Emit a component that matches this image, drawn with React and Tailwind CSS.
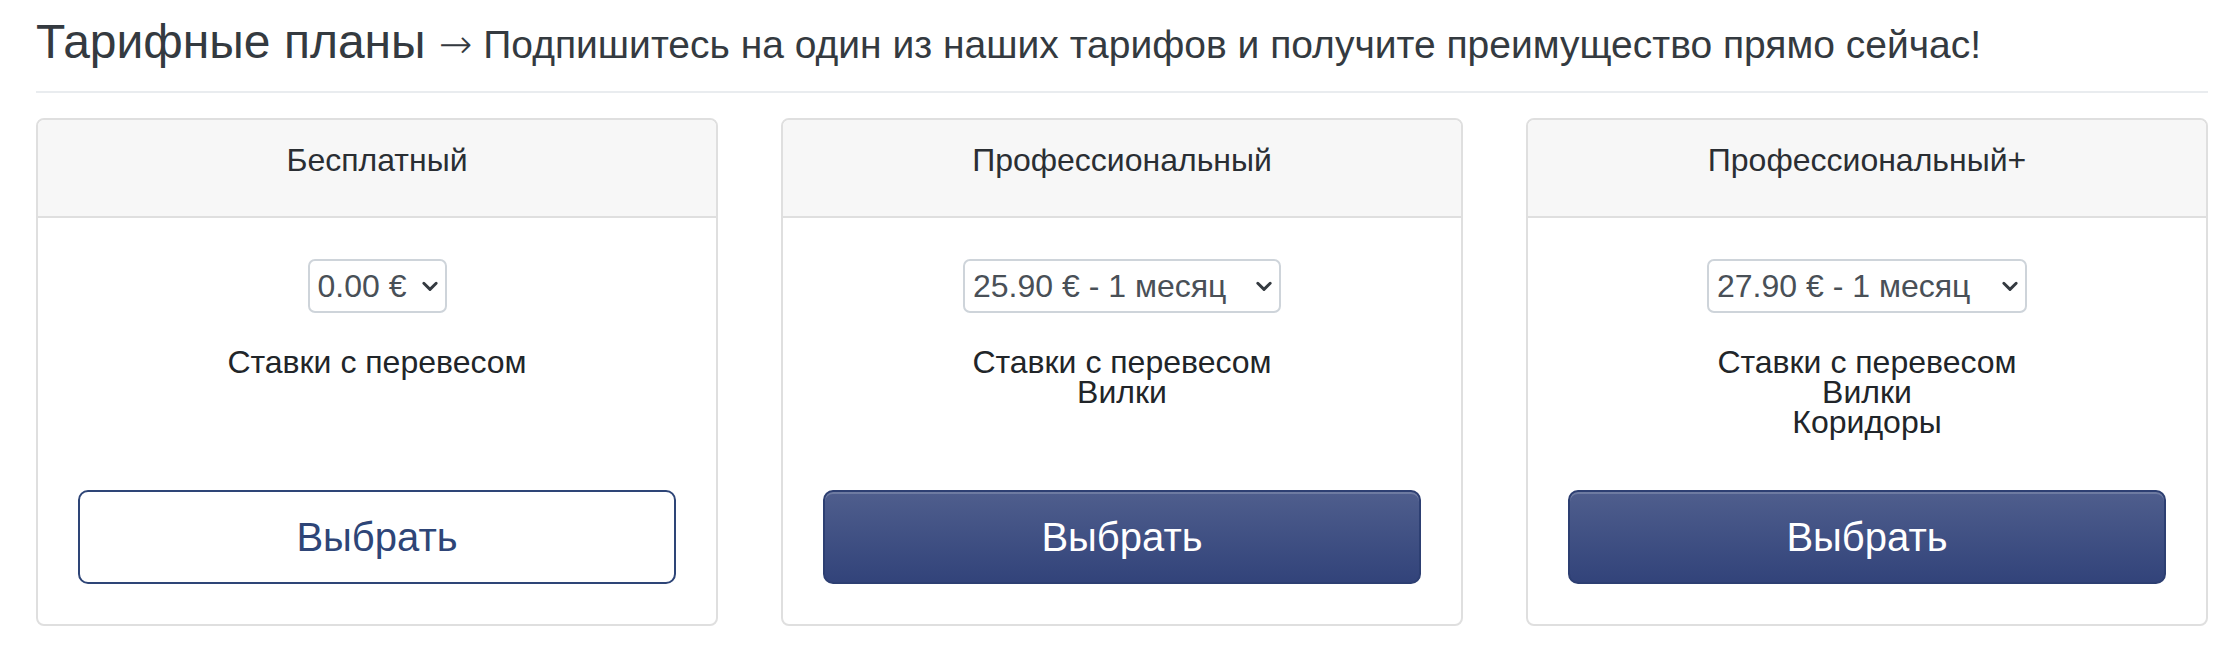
const plans = [
  {
    name: 'Бесплатный',
    price: '0.00 €',
    selectWidth: 'w-[139px]',
    features: ['Ставки с перевесом'],
    primary: false,
  },
  {
    name: 'Профессиональный',
    price: '25.90 € - 1 месяц',
    selectWidth: 'w-[318px]',
    features: ['Ставки с перевесом', 'Вилки'],
    primary: true,
  },
  {
    name: 'Профессиональный+',
    price: '27.90 € - 1 месяц',
    selectWidth: 'w-[320px]',
    features: ['Ставки с перевесом', 'Вилки', 'Коридоры'],
    primary: true,
  },
];

const Chevron = () => (
  <svg
    className="pointer-events-none absolute right-[8px] top-1/2 h-[18px] w-[18px] -translate-y-1/2"
    viewBox="0 0 16 16"
    fill="none"
  >
    <path
      d="M2.5 5.5l5.5 5.5 5.5-5.5"
      stroke="#343a40"
      strokeWidth="2.6"
      strokeLinecap="round"
      strokeLinejoin="round"
    />
  </svg>
);

const PlanCard = ({ plan }) => (
  <div className="flex flex-col overflow-hidden rounded-[8px] border-2 border-[#dfdfdf] bg-white">
    <div className="border-b-2 border-[#dfdfdf] bg-[#f7f7f7] pt-[21px] pb-[37px] text-center text-[32px] leading-[38px] text-[#2a2e33]">
      {plan.name}
    </div>
    <div className="flex flex-1 flex-col items-center px-[40px] pt-[41px] pb-[40px]">
      <div className={`relative ${plan.selectWidth}`}>
        <select
          defaultValue={plan.price}
          className="h-[54px] w-full appearance-none rounded-[7px] border-2 border-[#ced4da] bg-white pl-[8px] pr-[34px] text-[32px] leading-[40px] text-[#495057] outline-none"
        >
          <option>{plan.price}</option>
        </select>
        <Chevron />
      </div>
      {/* tight line spacing, as in the original */}
      <div className="mt-[34px] mb-[53px] text-center text-[32px] leading-[30px] text-[#212529]">
        {plan.features.map((f) => (
          <div key={f}>{f}</div>
        ))}
      </div>
      {plan.primary ? (
        <button className="mt-auto h-[94px] w-full rounded-[10px] border-2 border-[#2d3f72] bg-gradient-to-b from-[#4f5e8d] to-[#32437a] text-[40px] leading-[48px] text-white shadow-[inset_0_2px_0_rgba(255,255,255,0.18)]">
          Выбрать
        </button>
      ) : (
        <button className="mt-auto h-[94px] w-full rounded-[10px] border-2 border-[#2e4577] bg-white text-[40px] leading-[48px] text-[#2e4577]">
          Выбрать
        </button>
      )}
    </div>
  </div>
);

export default function App() {
  return (
    <div className="min-h-screen bg-white pt-[13px] pl-[36px] pr-[30px] font-['Liberation_Sans',Arial,sans-serif]">
      <h4 className="text-[48px] leading-[1.2] font-normal text-[#343a40]">
        Тарифные планы{' '}
        <small className="text-[39px]">
          <span className="font-['DejaVu_Sans',sans-serif] text-[40px] font-light">→</span>{' '}
          Подпишитесь на один из наших тарифов и получите преимущество прямо сейчас!
        </small>
      </h4>
      <div className="mt-[20px] h-[2px] bg-[#e9ecef]" />
      <div className="mt-[25px] grid grid-cols-3 gap-x-[63px]">
        {plans.map((plan) => (
          <PlanCard key={plan.name} plan={plan} />
        ))}
      </div>
    </div>
  );
}
